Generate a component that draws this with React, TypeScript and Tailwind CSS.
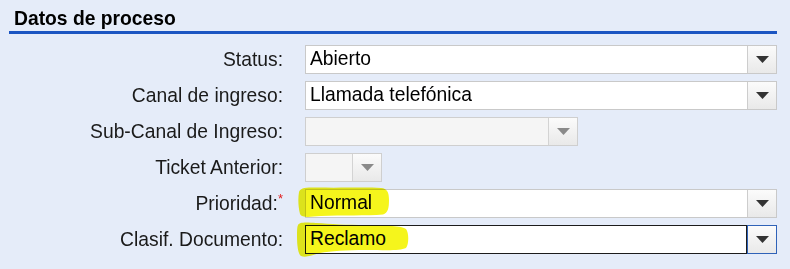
import React from "react";

const font = { fontFamily: '"Liberation Sans", Arial, sans-serif' };

function Tri({ disabled }: { disabled?: boolean }) {
  return (
    <svg width="13" height="7" viewBox="0 0 13 7">
      <polygon points="0,0 13,0 6.5,7" fill={disabled ? "#8a8a8a" : "#333333"} />
    </svg>
  );
}

function Select({
  value,
  width,
  disabled,
  focused,
  highlight,
}: {
  value?: string;
  width: string;
  disabled?: boolean;
  focused?: boolean;
  highlight?: React.ReactNode;
}) {
  return (
    <div className={`relative flex h-[29px] ${width}`}>
      {focused ? (
        <>
          <div className="flex flex-1 items-center border border-[#1c1c1c] bg-white pl-[4px] text-black">
            {value}
          </div>
          <div className="flex w-[30px] items-center justify-center border border-[#2f62b8] bg-gradient-to-b from-[#fbfbfb] to-[#e9e9e9]">
            <Tri />
          </div>
        </>
      ) : (
        <div
          className={`flex flex-1 border ${
            disabled ? "border-[#cfcfcf] bg-[#f5f5f5]" : "border-[#c9c9c9] bg-white"
          }`}
        >
          <div className="flex flex-1 items-center pl-[4px] text-black">{value}</div>
          <div
            className={`flex w-[29px] items-center justify-center border-l ${
              disabled ? "border-[#d3d3d3]" : "border-[#cdcdcd]"
            } bg-gradient-to-b from-[#fbfbfb] to-[#e9e9e9]`}
          >
            <Tri disabled={disabled} />
          </div>
        </div>
      )}
      {highlight}
    </div>
  );
}

function Row({
  label,
  required,
  children,
}: {
  label: string;
  required?: boolean;
  children: React.ReactNode;
}) {
  return (
    <div className="flex h-[29px] items-center">
      <div className="w-[283px] text-right leading-[29px] text-[#1a1a1a]">
        {label}
        {required && (
          <span className="relative top-[-7px] text-[13px] leading-none text-[#e02020]">*</span>
        )}
      </div>
      <div className="ml-[22px]">{children}</div>
    </div>
  );
}

export default function App() {
  return (
    <div
      className="h-[269px] w-[790px] overflow-hidden bg-[#e5ecf9] text-[19.3px]"
      style={font}
    >
      <div className="mx-[9px] w-[768px] border-b-[3px] border-[#1b55c2] pb-[1px] pl-[5px] pt-[8px]">
        <div className="font-bold leading-[22px] text-black">Datos de proceso</div>
      </div>
      <div className="mt-[11px] flex flex-col gap-[7px]">
        <Row label="Status:">
          <Select value="Abierto" width="w-[472px]" />
        </Row>
        <Row label="Canal de ingreso:">
          <Select value="Llamada telefónica" width="w-[472px]" />
        </Row>
        <Row label="Sub-Canal de Ingreso:">
          <Select width="w-[273px]" disabled />
        </Row>
        <Row label="Ticket Anterior:">
          <Select width="w-[77px]" disabled />
        </Row>
        <Row label="Prioridad:" required>
          <Select
            value="Normal"
            width="w-[472px]"
            highlight={
              <svg
                className="pointer-events-none absolute left-[-8px] top-[-3px] mix-blend-multiply"
                width="100"
                height="34"
                viewBox="0 0 100 34"
              >
                <path
                  d="M2,6 C3,2 8,1 20,1.5 C45,2 70,1 84,2 C90,2.5 92,6 92,14 C92,22 91,27 86,28.5 C70,30 45,29 24,30 C12,31 5,32 3,28 C1,20 1,12 2,6 Z"
                  fill="#f5f51c"
                />
              </svg>
            }
          />
        </Row>
        <Row label="Clasif. Documento:">
          <Select
            value="Reclamo"
            width="w-[472px]"
            focused
            highlight={
              <svg
                className="pointer-events-none absolute left-[-9px] top-[-5px] mix-blend-multiply"
                width="116"
                height="40"
                viewBox="0 0 116 40"
              >
                <path
                  d="M2,5 C3,2 10,2 20,3 C35,4 50,5 70,5 C90,5 106,6 110,9 C113,13 113,24 110,28 C104,31 90,30 70,30 C50,30 35,31 24,33 C16,35 10,38 5,36 C2,34 1,25 1,16 C1,11 1,7 2,5 Z"
                  fill="#f5f51c"
                />
              </svg>
            }
          />
        </Row>
      </div>
    </div>
  );
}
